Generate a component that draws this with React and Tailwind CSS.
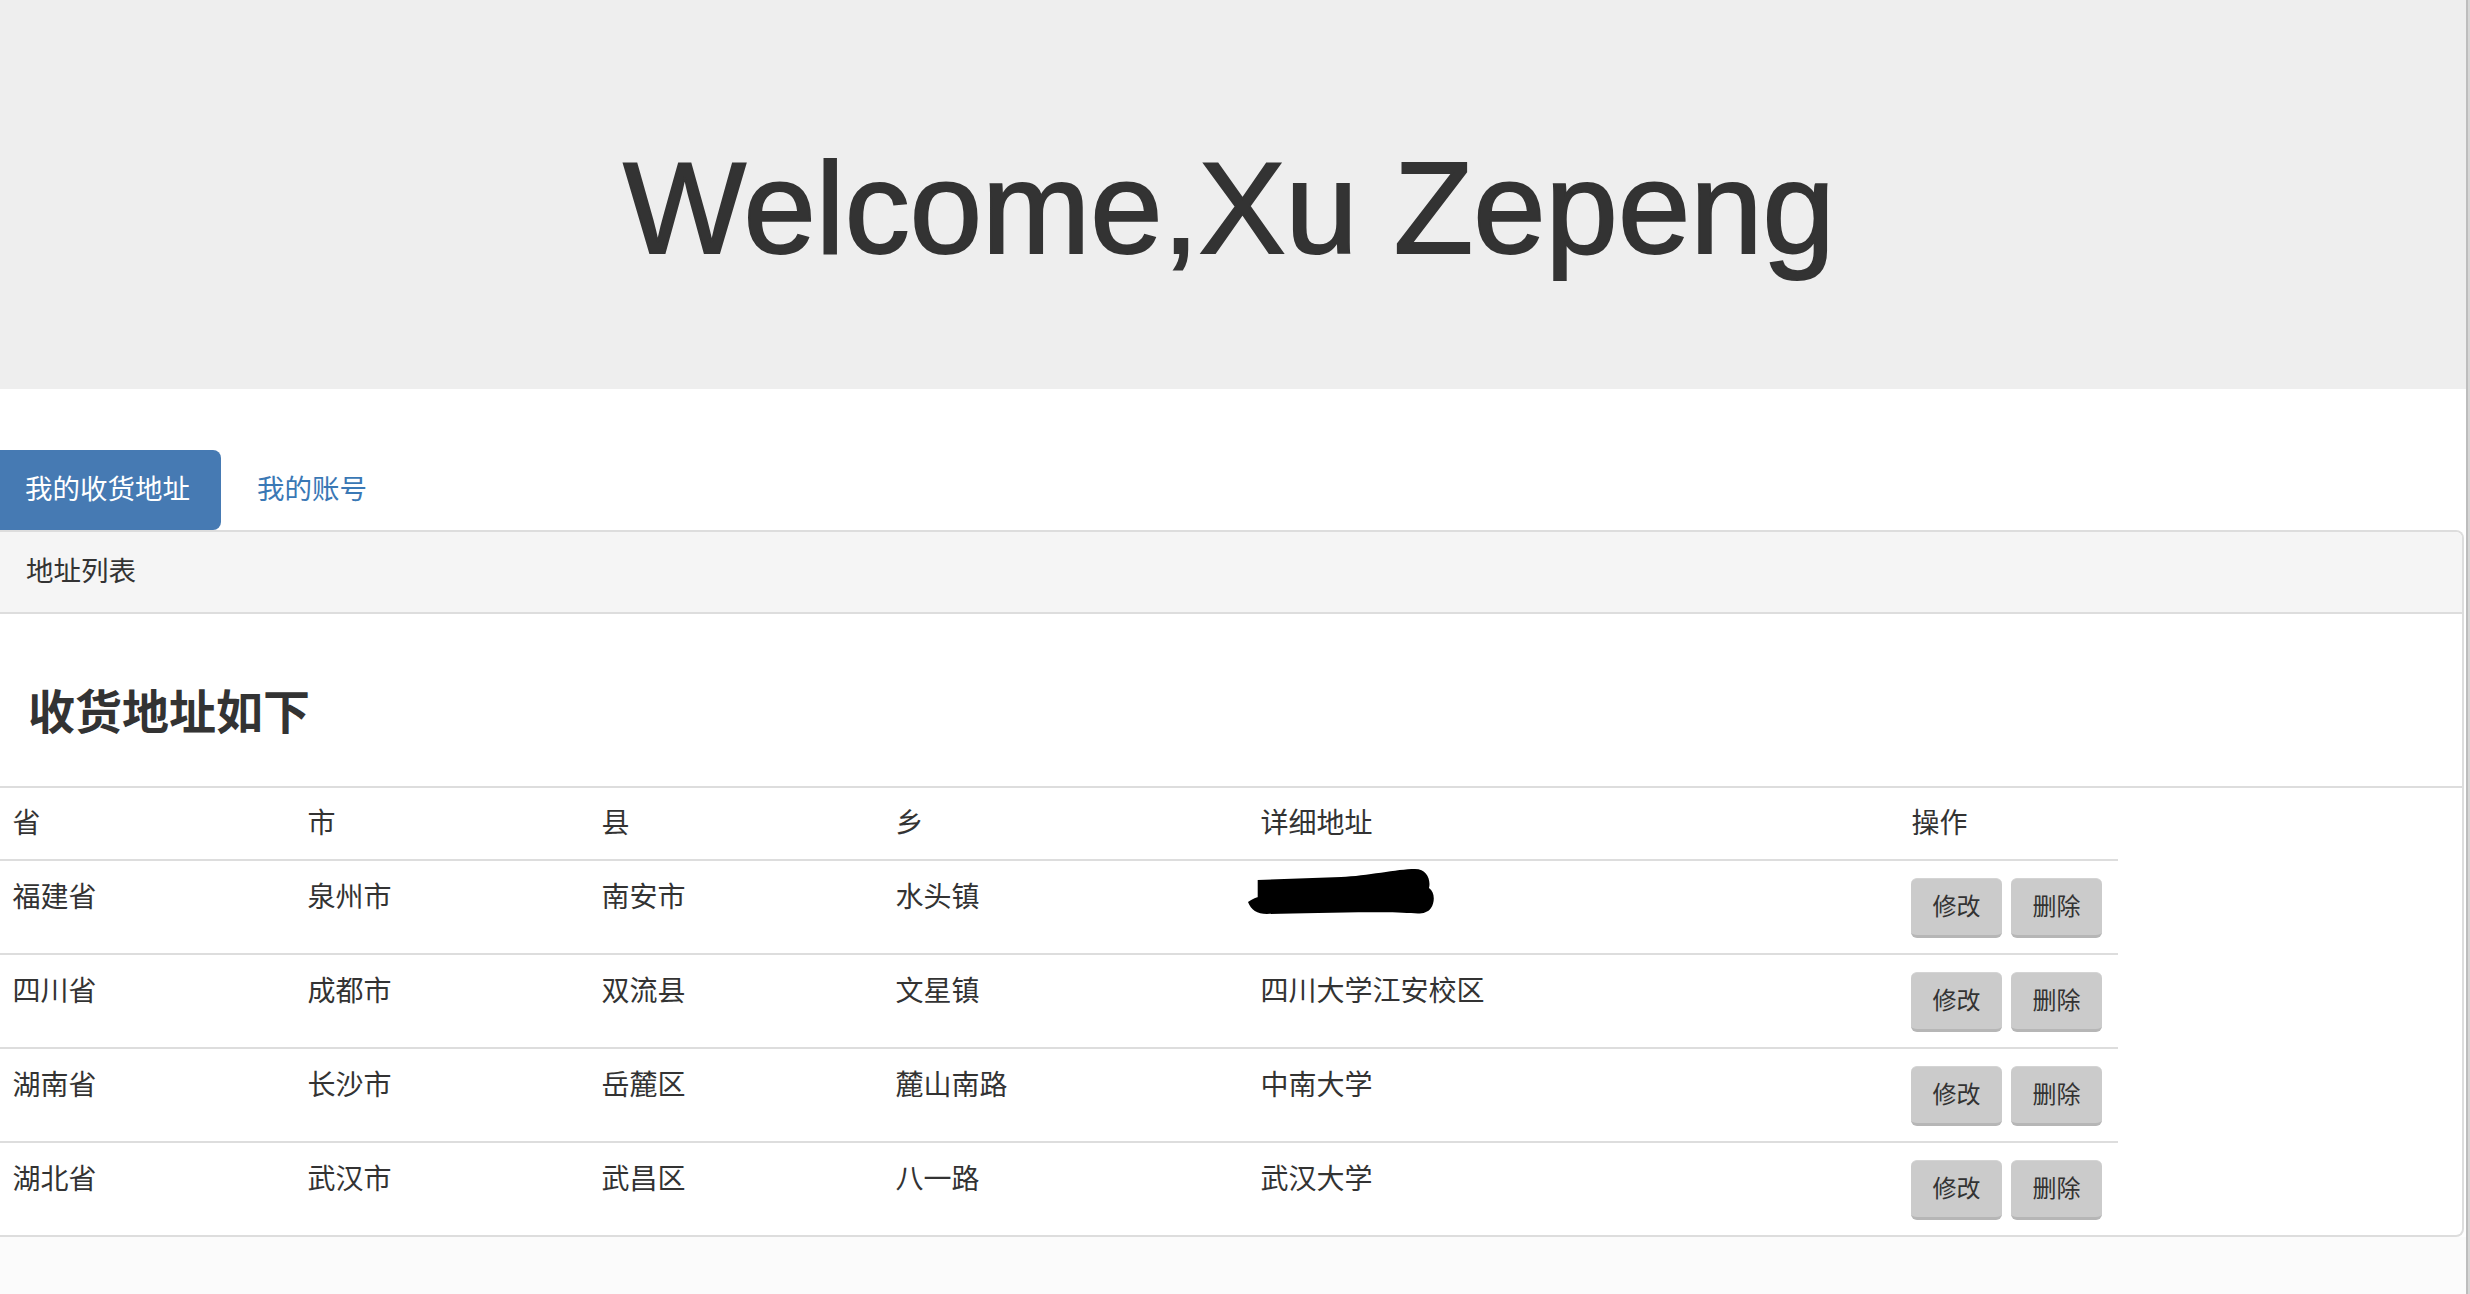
import React from "react";

const rows = [
  ["福建省", "泉州市", "南安市", "水头镇", null],
  ["四川省", "成都市", "双流县", "文星镇", "四川大学江安校区"],
  ["湖南省", "长沙市", "岳麓区", "麓山南路", "中南大学"],
  ["湖北省", "武汉市", "武昌区", "八一路", "武汉大学"],
];

const grid = "grid grid-cols-[295px_294px_294px_365px_651px_219px] w-[2118px]";

function Scribble() {
  return (
    <svg width="188" height="48" viewBox="0 0 188 48" className="-ml-[14px] -mt-[10px] block">
      <path
        d="M10.7 12 L94 9 C120 8 150 1 168 1 C180 1 184 12 182 20 C188 24 188 34 184 40 C180 46 172 46 164 45 C130 43 60 45 20 46 C10 46 4 42 1 34 C5 31 10 29 14 28 L14 30 L10.7 30 Z"
        fill="#000"
      />
    </svg>
  );
}

function Btn({ children }) {
  return (
    <button className="h-[60px] w-[91px] rounded-[6px] bg-[#cbcbcb] border-t border-t-[#d4d4d4] border-b-[3px] border-b-[#b6b6b6] text-[24px] leading-[30px] text-[#333] flex items-center justify-center">
      {children}
    </button>
  );
}

export default function App() {
  return (
    <div className="flex w-[2470px] min-h-[1294px] font-['Liberation_Sans','Noto_Sans_CJK_SC',sans-serif] text-[#333]">
      <div className="w-[2466px] flex flex-col bg-white">
        <div className="h-[389px] bg-[#eeeeee] pt-[138px]">
          <h1 className="text-center text-[130px] leading-[141px] font-normal text-[#333] [-webkit-text-stroke:2px_#333] pr-[8px]">
            Welcome,Xu Zepeng
          </h1>
        </div>
        <div className="pt-[61px] flex h-[141px]">
          <div className="h-[80px] w-[221px] bg-[#467ab3] rounded-r-[8px] text-white text-[27.5px] leading-[40px] pl-[25px] flex items-center">
            我的收货地址
          </div>
          <div className="h-[80px] ml-[4px] px-[32px] text-[#3a78b5] text-[27.5px] leading-[40px] flex items-center">
            我的账号
          </div>
        </div>
        <div className="w-[2464px] border-t-2 border-r-2 border-b-2 border-[#dddddd] rounded-r-[8px] bg-white">
          <div className="h-[82px] bg-[#f5f5f5] border-b-2 border-[#dddddd] rounded-tr-[6px] pl-[26px] flex items-center text-[27.5px] leading-[40px]">
            地址列表
          </div>
          <div className="h-[174px] pt-[73px] pl-[28px] border-b-2 border-[#dddddd]">
            <h3 className="text-[47px] leading-[52px] font-bold text-[#333]">收货地址如下</h3>
          </div>
          <div className={grid + " border-b-2 border-[#dddddd] text-[28px] leading-[40px]"}>
            {["省", "市", "县", "乡", "详细地址", "操作"].map((h) => (
              <div key={h} className="px-[12.5px] pt-[16px] pb-[15px]">
                {h}
              </div>
            ))}
          </div>
          {rows.map((r, i) => (
            <div
              key={i}
              className={
                grid +
                " text-[28px] leading-[40px] " +
                (i < rows.length - 1 ? "border-b-2 border-[#dddddd] h-[94px]" : "h-[92px]")
              }
            >
              {r.map((c, j) => (
                <div key={j} className="px-[12.5px] pt-[17px]">
                  {c === null ? <Scribble /> : c}
                </div>
              ))}
              <div className="pl-[12px] pt-[17px] flex gap-[9px]">
                <Btn>修改</Btn>
                <Btn>删除</Btn>
              </div>
            </div>
          ))}
        </div>
        <div className="flex-1 bg-[#fbfbfb]" />
      </div>
      <div className="w-[4px] bg-[#d6d6d6] border-l-2 border-[#bdbdbd]" />
    </div>
  );
}
